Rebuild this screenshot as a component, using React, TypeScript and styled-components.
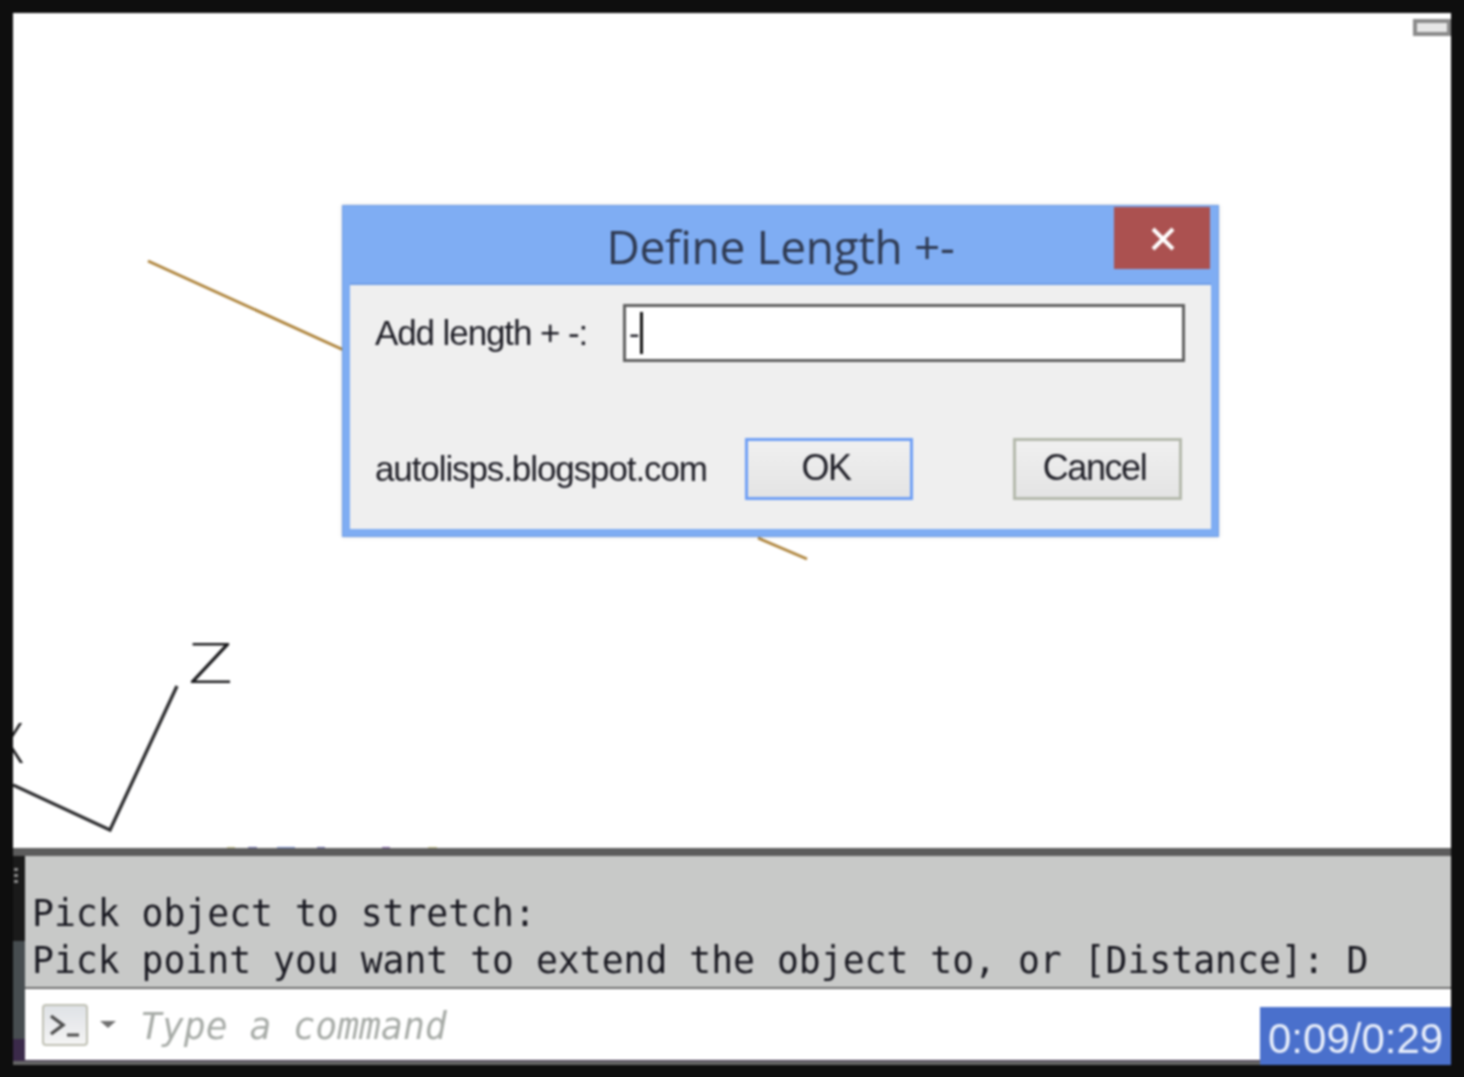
import React from 'react'
import styled, { createGlobalStyle } from 'styled-components'

const GlobalStyle = createGlobalStyle`
    html, body {
        margin: 0;
        padding: 0;
        background: #0e0e0e;
    }
    * {
        box-sizing: border-box;
    }
`

const edgeMarks = [
    { from: 214, to: 222, color: '#b8b060' },
    { from: 235, to: 244, color: '#3a3a90' },
    { from: 264, to: 282, color: '#4a66c0' },
    { from: 304, to: 312, color: '#3a3a90' },
    { from: 369, to: 377, color: '#5a2a90' },
    { from: 415, to: 424, color: '#b8b060' },
]

const App = () => {
    return (
        <Frame>
            <GlobalStyle />
            <Screen>
                <Canvas>
                    <Drawing width="1438" height="835" viewBox="0 0 1438 835">
                        <line x1="135" y1="248" x2="335" y2="339" stroke="#ad8238" strokeWidth="2.8" />
                        <line x1="745" y1="525" x2="794" y2="546" stroke="#ad8238" strokeWidth="2.8" />
                        <polyline points="0,772 97,817 164,673" fill="none" stroke="#2e2e30" strokeWidth="3.4" />
                        {edgeMarks.map(mark => (
                            <line key={mark.from} x1={mark.from} y1="835" x2={mark.to} y2="835" stroke={mark.color} strokeWidth="1.5" />
                        ))}
                    </Drawing>
                    <AxisZ>Z</AxisZ>
                    <AxisX>X</AxisX>
                    <RestoreBox />
                    <Dialog>
                        <TitleBar>
                            <Title>Define Length +-</Title>
                            <CloseButton aria-label="close">
                                <svg width="26" height="26" viewBox="0 0 26 26">
                                    <path d="M3 3 L23 23 M23 3 L3 23" stroke="#fff" strokeWidth="4" fill="none" />
                                </svg>
                            </CloseButton>
                        </TitleBar>
                        <DialogBody>
                            <Row>
                                <Label>Add length + -:</Label>
                                <LengthInput>
                                    -
                                    <Caret />
                                </LengthInput>
                            </Row>
                            <Row>
                                <Label>autolisps.blogspot.com</Label>
                                <ActionButton $primary>OK</ActionButton>
                                <ActionButton>Cancel</ActionButton>
                            </Row>
                        </DialogBody>
                    </Dialog>
                </Canvas>
                <CommandPanel>
                    <Grip />
                    <History>
                        <HistoryLine>Pick object to stretch:</HistoryLine>
                        <HistoryLine>Pick point you want to extend the object to, or [Distance]: D</HistoryLine>
                    </History>
                    <CommandRow>
                        <PromptIcon>
                            <svg width="34" height="30" viewBox="0 0 34 30">
                                <path d="M3 6 L15 15 L3 24" stroke="#4c4c4c" strokeWidth="3.4" fill="none" />
                                <path d="M19 25 H31" stroke="#4c4c4c" strokeWidth="3" fill="none" />
                            </svg>
                        </PromptIcon>
                        <DropCaret />
                        <Placeholder>Type a command</Placeholder>
                    </CommandRow>
                    <TimeBadge>0:09/0:29</TimeBadge>
                </CommandPanel>
            </Screen>
        </Frame>
    )
}

const Frame = styled.div`
    width: 1464px;
    height: 1077px;
    padding: 13px 13px 12px;
    background: #0e0e0e;
    overflow: hidden;
`

const Screen = styled.div`
    display: flex;
    flex-direction: column;
    height: 100%;
    background: #fff;
    filter: blur(0.8px);
`

const Canvas = styled.div`
    position: relative;
    flex: 1;
    background: #fff;
    overflow: hidden;
`

const Drawing = styled.svg`
    position: absolute;
    top: 0;
    left: 0;
`

const AxisZ = styled.span`
    position: absolute;
    left: 175px;
    top: 610px;
    font-family: "Open Sans", "Liberation Sans", sans-serif;
    font-size: 56px;
    font-weight: 300;
    line-height: 76px;
    color: #1c1c1e;
    transform: scaleX(1.4);
    transform-origin: left center;
`

const AxisX = styled.span`
    position: absolute;
    left: -20px;
    top: 690px;
    font-family: "Open Sans", "Liberation Sans", sans-serif;
    font-size: 56px;
    font-weight: 300;
    line-height: 76px;
    color: #1c1c1e;
`

const RestoreBox = styled.div`
    position: absolute;
    top: 6px;
    right: 0;
    width: 38px;
    height: 17px;
    background: #e6e6e6;
    border: 4px solid #8a8a8a;
`

const Dialog = styled.div`
    position: absolute;
    left: 329px;
    top: 192px;
    width: 877px;
    height: 332px;
    display: flex;
    flex-direction: column;
    padding: 0 7px 7px;
    background: #7fadf3;
    border: 1px solid #6f9de6;
    box-shadow: 0 0 4px rgba(0, 0, 0, 0.15);
`

const TitleBar = styled.div`
    position: relative;
    height: 77px;
    display: flex;
    align-items: center;
    justify-content: center;
    flex-shrink: 0;
`

const Title = styled.h1`
    margin: 2px 0 0;
    font-family: "Open Sans", "Liberation Sans", sans-serif;
    font-size: 46px;
    font-weight: 400;
    letter-spacing: -0.3px;
    color: #2f3a52;
`

const CloseButton = styled.button`
    position: absolute;
    top: 1px;
    right: 1px;
    width: 96px;
    height: 62px;
    padding: 2px 0 0 2px;
    display: flex;
    align-items: center;
    justify-content: center;
    background: #ab5150;
    border: none;
`

const DialogBody = styled.div`
    flex: 1;
    display: flex;
    flex-direction: column;
    justify-content: space-between;
    padding: 19px 26px 29px 25px;
    background: #efefef;
    border-top: 2px solid #6f9de6;
`

const Row = styled.div`
    display: flex;
    align-items: center;
`

const Label = styled.span`
    width: 248px;
    flex-shrink: 0;
    font-family: "Liberation Sans", Arial, sans-serif;
    font-size: 35px;
    letter-spacing: -1.1px;
    white-space: nowrap;
    color: #1e1e26;

    & + button {
        margin-left: 122px;
    }
`

const LengthInput = styled.div`
    flex: 1;
    height: 58px;
    padding: 0 0 0 3px;
    display: flex;
    align-items: center;
    font-family: "Liberation Sans", Arial, sans-serif;
    font-size: 32px;
    color: #1e1e26;
    background: #fff;
    border: 3px solid #606060;
`

const Caret = styled.span`
    width: 3px;
    height: 42px;
    background: #111;
`

const ActionButton = styled.button<{ $primary?: boolean }>`
    width: ${props => (props.$primary ? '168px' : '169px')};
    height: 62px;
    padding: 0 6px 2px 0;
    margin-left: ${props => (props.$primary ? '0' : '100px')};
    font-family: "Liberation Sans", Arial, sans-serif;
    font-size: 36px;
    letter-spacing: -1.4px;
    color: #1e1e26;
    background: linear-gradient(#f0f0f0, #e4e4e4);
    border: 3px solid ${props => (props.$primary ? '#6f9ff5' : '#b4b9ac')};
`

const CommandPanel = styled.div`
    position: relative;
    height: 217px;
    flex-shrink: 0;
    display: flex;
    flex-direction: column;
    padding: 8px 0 5px 12px;
    background: linear-gradient(#5c5c5c 0, #5c5c5c 8px, #1a1a1a 8px, #1a1a1a 43%, #474d50 43%, #474d50 88%, #3b2a4a 88%, #3b2a4a 98%, #666 98%);
`

const Grip = styled.div`
    position: absolute;
    left: 1px;
    top: 20px;
    width: 4px;
    height: 18px;
    background: repeating-linear-gradient(#8a8a8a 0, #8a8a8a 3px, transparent 3px, transparent 6px);
`

const History = styled.div`
    height: 133px;
    padding: 34px 0 0 7px;
    background: #c8c9c8;
    border-bottom: 2px solid #6e6e6e;
`

const HistoryLine = styled.div`
    font-family: "DejaVu Sans Mono", "Liberation Mono", monospace;
    font-size: 36.4px;
    line-height: 47px;
    white-space: pre;
    color: #1a1a22;
`

const CommandRow = styled.div`
    flex: 1;
    display: flex;
    align-items: center;
    padding: 0 0 0 17px;
    background: #fff;
`

const PromptIcon = styled.div`
    width: 46px;
    height: 42px;
    display: flex;
    align-items: center;
    justify-content: center;
    background: linear-gradient(#dfe2e6, #f4f4f4);
    border: 2px solid #bfc0b4;
    border-radius: 4px;
`

const DropCaret = styled.span`
    width: 0;
    height: 0;
    margin: 0 0 0 12px;
    border-left: 8px solid transparent;
    border-right: 8px solid transparent;
    border-top: 7px solid #707070;
`

const Placeholder = styled.span`
    margin: 3px 0 0 24px;
    font-family: "DejaVu Sans Mono", "Liberation Mono", monospace;
    font-size: 36.4px;
    font-style: italic;
    white-space: pre;
    color: #a8aca8;
`

const TimeBadge = styled.div`
    position: absolute;
    right: 0;
    bottom: 0;
    width: 191px;
    height: 58px;
    padding: 5px 0 0 8px;
    font-family: "Liberation Sans", Arial, sans-serif;
    font-size: 42px;
    line-height: 54px;
    white-space: nowrap;
    color: #e8eefa;
    background: #4a70cc;
`

export default App
